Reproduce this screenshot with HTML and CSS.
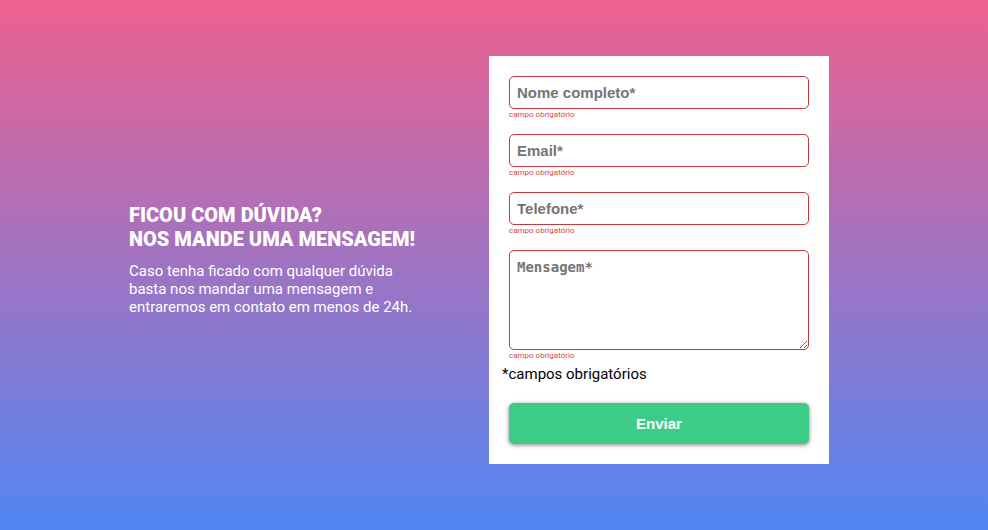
FILE: index.html
```html
<!DOCTYPE html>
<html lang="pt-BR">
<head>
<meta charset="utf-8">
<meta name="viewport" content="width=device-width, initial-scale=1">
<title>Contato</title>
<link rel="stylesheet" href="styles.css">
</head>
<body>
<main class="contact">
  <section class="intro">
    <h1 class="title">Ficou com dúvida?<br>Nos mande uma mensagem!</h1>
    <p class="text">Caso tenha ficado com qualquer dúvida basta nos mandar uma mensagem e entraremos em contato em menos de 24h.</p>
  </section>
  <form class="form">
    <div class="field">
      <input class="control" id="nome" type="text" placeholder="Nome completo*" aria-label="Nome completo">
      <label class="hint" for="nome">campo obrigatório</label>
    </div>
    <div class="field">
      <input class="control" id="email" type="email" placeholder="Email*" aria-label="Email">
      <label class="hint" for="email">campo obrigatório</label>
    </div>
    <div class="field">
      <input class="control" id="telefone" type="tel" placeholder="Telefone*" aria-label="Telefone">
      <label class="hint" for="telefone">campo obrigatório</label>
    </div>
    <div class="field">
      <textarea class="control message" id="mensagem" placeholder="Mensagem*" aria-label="Mensagem"></textarea>
      <label class="hint" for="mensagem">campo obrigatório</label>
    </div>
    <p class="note">*campos obrigatórios</p>
    <button class="submit" type="submit">Enviar</button>
  </form>
</main>
</body>
</html>
```
FILE: styles.css
```css
* {
  box-sizing: border-box;
  margin: 0;
  padding: 0;
}

body {
  min-height: 100vh;
  font-family: Roboto, sans-serif;
  background: linear-gradient(180deg, #ed618f, #5186f4);
}

.contact {
  display: flex;
  justify-content: center;
  align-items: center;
  gap: 60px;
  min-height: 100vh;
  padding: 0 50px 10px 20px;
}

.intro {
  flex: 0 1 300px;
  padding-bottom: 2px;
  color: #fff;
}

.title {
  margin-bottom: 11px;
  font-size: 20px;
  font-weight: 900;
  line-height: 24px;
  text-transform: uppercase;
}

.text {
  font-size: 15px;
  line-height: 18px;
}

.form {
  flex: 0 1 340px;
  display: flex;
  flex-direction: column;
  padding: 20px;
  background: #fff;
}

.field {
  display: flex;
  flex-direction: column;
  margin-bottom: 13px;
}

.control {
  width: 100%;
  height: 33px;
  padding: 7px;
  border: 1px solid #c0393b;
  border-radius: 5px;
  font-family: "Liberation Sans", sans-serif;
  font-size: 15px;
  font-weight: 700;
  background: #fff;
}

.control::placeholder {
  color: #757575;
}

.message {
  height: 100px;
  padding: 8px 7px;
  font-family: "DejaVu Sans Mono", monospace;
  font-size: 14px;
  resize: both;
}

.hint {
  font-size: 8px;
  line-height: 12px;
  color: #d64541;
}

.field:has(.message) {
  margin-bottom: 3px;
}

.note {
  margin: 0 0 20px -7px;
  font-size: 15px;
  line-height: 18px;
}

.submit {
  height: 41px;
  border: 0;
  border-radius: 5px;
  font-family: "Liberation Sans", sans-serif;
  font-size: 15px;
  font-weight: 700;
  color: #fff;
  background: #3dcc87;
  box-shadow: 0 1px 4px rgba(0, 0, 0, 0.5);
}
```
